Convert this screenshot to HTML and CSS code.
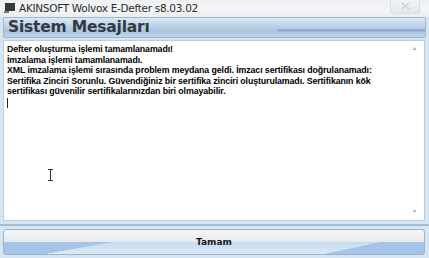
FILE: index.html
```html
<!DOCTYPE html>
<html lang="tr">

<head>
  <meta charset="UTF-8" />
  <title>AKINSOFT Wolvox E-Defter s8.03.02</title>
  <link rel="stylesheet" href="styles.css">
</head>

<body>
  <div class="window">
    <div class="titlebar">
      <svg class="app-icon" width="11" height="10" viewBox="0 0 11 10">
        <rect x="1" y="0" width="10" height="8" fill="#3a3a3a" />
        <rect x="0" y="8" width="5" height="2" fill="#6a8a5a" />
      </svg>
      <span class="title">AKINSOFT Wolvox E-Defter s8.03.02</span>
      <div class="close-btn">
        <svg width="9" height="8" viewBox="0 0 9 8">
          <path d="M1 1 L8 7 M8 1 L1 7" stroke="#c8d2dc" stroke-width="1.6" />
        </svg>
      </div>
    </div>

    <div class="header">
      <h1>Sistem Mesajları</h1>
    </div>

    <div class="content">
      <div class="memo">
        <div class="memo-text">
          <p>Defter oluşturma işlemi tamamlanamadı!</p>
          <p>İmzalama işlemi tamamlanamadı.</p>
          <p>XML imzalama işlemi sırasında problem meydana geldi. İmzacı sertifikası doğrulanamadı:</p>
          <p>Sertifika Zinciri Sorunlu. Güvendiğiniz bir sertifika zinciri oluşturulamadı. Sertifikanın kök sertifikası güvenilir sertifikalarınızdan biri olmayabilir.</p>
          <span class="caret"></span>
        </div>
        <div class="scrollbar">
          <span class="arrow up">▲</span>
          <span class="arrow down">▼</span>
        </div>
        <span class="ibeam"></span>
      </div>
    </div>

    <div class="footer">
      <button class="ok-btn">Tamam</button>
    </div>
  </div>
</body>

</html>
```

FILE: styles.css
```css
html,
body {
  margin: 0;
  padding: 0;
}

body {
  width: 429px;
  height: 258px;
  overflow: hidden;
  background: #d6e5f2;
  font-family: "Liberation Sans", Arial, sans-serif;
}

.window {
  display: flex;
  flex-direction: column;
  height: 258px;
}

.titlebar {
  height: 18px;
  display: flex;
  align-items: center;
  padding-left: 4px;
  background: linear-gradient(to bottom, #eef0f2, #f4f5f6 60%, #e9edf1);
}

.app-icon {
  margin-right: 4px;
}

.title {
  font-size: 10.5px;
  color: #2b2b2b;
  font-family: "DejaVu Sans", sans-serif;
  letter-spacing: -0.3px;
}

.close-btn {
  margin-left: auto;
  margin-right: 9px;
  width: 28px;
  height: 14px;
  margin-top: -3px;
  display: flex;
  align-items: center;
  justify-content: center;
  border: 1px solid #d8dee6;
  border-top: none;
  border-radius: 0 0 3px 3px;
  background: linear-gradient(to bottom, #f2f4f6, #e2e8ee);
}

.header {
  height: 21px;
  margin: 0 3px;
  border: 1px solid #9fb6cd;
  border-radius: 2px;
  display: flex;
  align-items: center;
  padding-left: 4px;
  background:
    linear-gradient(to bottom, transparent 58%, rgba(100, 118, 185, 0.55) 62%, transparent 76%) right / 35% 100% no-repeat,
    linear-gradient(to bottom, #dde8f3, #b9d1e6 45%, #a9c6df 70%, #c0d6ea);
}

h1 {
  margin: 0;
  font-size: 15.5px;
  font-weight: bold;
  color: #333a40;
  font-family: "DejaVu Sans", sans-serif;
  letter-spacing: -0.2px;
}

.content {
  padding: 2px 4px 3px 3px;
  border-bottom: 2px solid #a6bccf;
}

.memo {
  position: relative;
  height: 179px;
  display: flex;
  background: #ffffff;
  border: 1px solid #b9cfe2;
}

.memo-text {
  flex: 1;
  padding: 3px 3px 0 3px;
  font-size: 8.8px;
  font-weight: bold;
  line-height: 10.6px;
  color: #000000;
  font-family: "Liberation Sans", Arial, sans-serif;
  letter-spacing: -0.1px;
}

.memo-text p {
  margin: 0;
}

.caret {
  display: block;
  width: 1px;
  height: 10px;
  background: #222;
  margin-top: 1px;
}

.scrollbar {
  width: 24px;
  display: flex;
  flex-direction: column;
  justify-content: space-between;
  align-items: flex-end;
  padding: 4px 7px 6px 0;
  box-sizing: border-box;
}

.arrow {
  font-size: 5px;
  color: #9aa4ae;
}

.ibeam {
  position: absolute;
  left: 44px;
  top: 128px;
  width: 5px;
  height: 10px;
  border-top: 1px solid #333;
  border-bottom: 1px solid #333;
  background: linear-gradient(#333, #333) center / 1px 100% no-repeat;
}

.footer {
  padding: 3px 4px 3px 3px;
}

.ok-btn {
  width: 100%;
  height: 26px;
  border: 1px solid #9fb3c6;
  border-radius: 3px;
  font-family: "DejaVu Sans", sans-serif;
  font-weight: bold;
  font-size: 9px;
  color: #1a1a1a;
  background:
    linear-gradient(168deg, transparent 55%, #a4c4e8 56%) right bottom / 40% 50% no-repeat,
    linear-gradient(170deg, #a4c4e8 50%, transparent 51%) left bottom / 35% 50% no-repeat,
    linear-gradient(to bottom, #f4f5f6, #e8eaed 48%, #c6dcf0 52%, #dbe9f6);
  cursor: pointer;
}
```
